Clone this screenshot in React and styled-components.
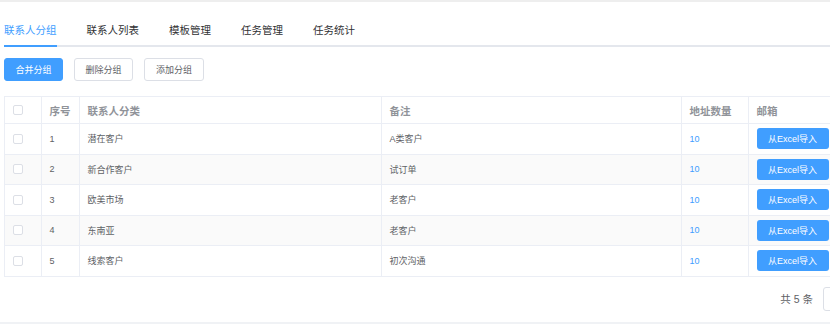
import React from 'react';
import styled, { createGlobalStyle } from 'styled-components';

const GlobalStyle = createGlobalStyle`
  html, body {
    margin: 0;
    padding: 0;
    background: #fff;
    font-family: "Liberation Sans", "Noto Sans CJK SC", sans-serif;
  }
`;

const Page = styled.div`
  width: 100%;
  overflow: hidden;
  border-top: 2px solid #eeeeee;
`;

const Content = styled.div`
  width: 879px;
  padding: 13px 0 0 4px;
`;

const TabBar = styled.div`
  display: flex;
  border-bottom: 2px solid #e4e7ed;
  margin-bottom: 11px;
`;

const Tab = styled.div`
  position: relative;
  height: 30px;
  line-height: 30px;
  padding: 0 15px;
  font-size: 10.5px;
  color: ${p => (p.active ? '#409eff' : '#303133')};
  &:first-child { padding-left: 0; }
  &::after {
    content: '';
    display: ${p => (p.active ? 'block' : 'none')};
    position: absolute;
    left: 0;
    right: 15px;
    bottom: -2px;
    height: 2px;
    background: #409eff;
  }
`;

const Toolbar = styled.div`
  display: flex;
  gap: 11px;
  margin-bottom: 15px;
`;

const Button = styled.button`
  height: 23px;
  width: ${p => p.w || 59}px;
  padding: 0;
  border-radius: 3px;
  font-family: inherit;
  font-size: 9px;
  border: 1px solid ${p => (p.primary ? '#409eff' : '#dcdfe6')};
  background: ${p => (p.primary ? '#409eff' : '#fff')};
  color: ${p => (p.primary ? '#fff' : '#606266')};
`;

const Table = styled.table`
  width: 834px;
  border-collapse: collapse;
  table-layout: fixed;
  border: 1px solid #ebeef5;
`;

const Th = styled.th`
  height: 26px;
  padding: 0 7.5px;
  text-align: left;
  font-size: 10.5px;
  font-weight: bold;
  color: #909399;
  border: 1px solid #ebeef5;
`;

const Row = styled.tr`
  background: ${p => (p.striped ? '#fafafa' : '#fff')};
`;

const Td = styled.td`
  height: 29.5px;
  padding: 0 7.5px;
  font-size: 9px;
  color: ${p => (p.link ? '#409eff' : '#606266')};
  border: 1px solid #ebeef5;
  white-space: nowrap;
`;

const Check = styled.span`
  display: block;
  width: 10px;
  height: 10px;
  box-sizing: border-box;
  border: 1px solid #dcdfe6;
  border-radius: 2px;
  background: #fff;
`;

const ImportButton = styled.button`
  display: block;
  width: 72px;
  height: 21px;
  padding: 0;
  border: none;
  border-radius: 3px;
  background: #409eff;
  color: #fff;
  font-family: inherit;
  font-size: 9px;
`;

const Pager = styled.div`
  display: flex;
  justify-content: flex-end;
  align-items: center;
  gap: 10px;
  margin-top: 10px;
  height: 24px;
`;

const Total = styled.span`
  font-size: 10.5px;
  color: #606266;
`;

const SizeBox = styled.div`
  width: 60px;
  height: 24px;
  box-sizing: border-box;
  border: 1px solid #dcdfe6;
  border-radius: 3px;
`;

const BottomLine = styled.div`
  margin-top: 11px;
  height: 2px;
  background: #f0f2f5;
`;

const tabs = ['联系人分组', '联系人列表', '模板管理', '任务管理', '任务统计'];

const rows = [
  { name: '潜在客户', note: 'A类客户', count: 10 },
  { name: '新合作客户', note: '试订单', count: 10 },
  { name: '欧美市场', note: '老客户', count: 10 },
  { name: '东南亚', note: '老客户', count: 10 },
  { name: '线索客户', note: '初次沟通', count: 10 },
];

export default function App() {
  return (
    <Page>
      <GlobalStyle />
      <Content>
        <TabBar>
          {tabs.map((t, i) => (
            <Tab key={t} active={i === 0}>{t}</Tab>
          ))}
        </TabBar>
        <Toolbar>
          <Button primary>合并分组</Button>
          <Button>删除分组</Button>
          <Button w={60}>添加分组</Button>
        </Toolbar>
        <Table>
          <colgroup>
            <col style={{ width: 37 }} />
            <col style={{ width: 38 }} />
            <col style={{ width: 302 }} />
            <col style={{ width: 300 }} />
            <col style={{ width: 67 }} />
            <col style={{ width: 90 }} />
          </colgroup>
          <thead>
            <tr>
              <Th><Check /></Th>
              <Th>序号</Th>
              <Th>联系人分类</Th>
              <Th>备注</Th>
              <Th>地址数量</Th>
              <Th>邮箱</Th>
            </tr>
          </thead>
          <tbody>
            {rows.map((r, i) => (
              <Row key={r.name} striped={i % 2 === 1}>
                <Td><Check /></Td>
                <Td>{i + 1}</Td>
                <Td>{r.name}</Td>
                <Td>{r.note}</Td>
                <Td link>{r.count}</Td>
                <Td><ImportButton>从Excel导入</ImportButton></Td>
              </Row>
            ))}
          </tbody>
        </Table>
        <Pager>
          <Total>共 5 条</Total>
          <SizeBox />
        </Pager>
      </Content>
      <BottomLine />
    </Page>
  );
}
